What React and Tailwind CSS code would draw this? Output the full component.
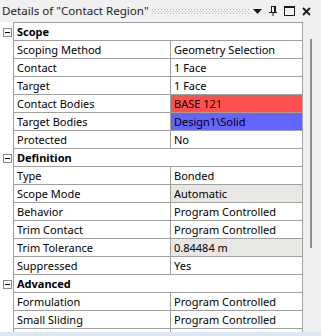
import React from "react";

const rows = [
  { section: "Scope" },
  { name: "Scoping Method", value: "Geometry Selection" },
  { name: "Contact", value: "1 Face" },
  { name: "Target", value: "1 Face" },
  { name: "Contact Bodies", value: "BASE 121", bg: "bg-[#ff5050]" },
  { name: "Target Bodies", value: "Design1\\Solid", bg: "bg-[#6464ff]" },
  { name: "Protected", value: "No" },
  { section: "Definition" },
  { name: "Type", value: "Bonded" },
  { name: "Scope Mode", value: "Automatic", bg: "bg-[#e8e7e3]" },
  { name: "Behavior", value: "Program Controlled" },
  { name: "Trim Contact", value: "Program Controlled" },
  { name: "Trim Tolerance", value: "0.84484 m", bg: "bg-[#e8e7e3]" },
  { name: "Suppressed", value: "Yes" },
  { section: "Advanced" },
  { name: "Formulation", value: "Program Controlled" },
  { name: "Small Sliding", value: "Program Controlled" },
];

function MinusBox() {
  return (
    <svg width="9" height="9" viewBox="0 0 9 9" className="block">
      <rect x="0.5" y="0.5" width="8" height="8" fill="white" stroke="#8a8a8a" />
      <rect x="2" y="4" width="5" height="1" fill="#000" />
    </svg>
  );
}

function Row({ r }) {
  if (r.section) {
    return (
      <div className="flex h-[18px]">
        <div className="w-[13px] flex items-center pl-[3px]">
          <MinusBox />
        </div>
        <div className="flex-1 border-l border-b border-r border-[#a0a0a0] flex items-center pl-[3px] font-bold text-black">
          {r.section}
        </div>
      </div>
    );
  }
  return (
    <div className="flex h-[18px]">
      <div className="w-[13px]" />
      <div className="flex-1 flex border-l border-b border-r border-[#a0a0a0]">
        <div className="w-[157px] border-r border-[#a0a0a0] flex items-center pl-[3px] text-black whitespace-nowrap">
          {r.name}
        </div>
        <div className={"flex-1 flex items-center pl-[3px] text-black whitespace-nowrap " + (r.bg || "")}>
          {r.value}
        </div>
      </div>
    </div>
  );
}

export default function App() {
  return (
    <div
      className="w-[321px] h-[336px] bg-[#f0f0f0] flex flex-col overflow-hidden text-[11px] leading-none"
      style={{ fontFamily: '"Noto Sans", sans-serif' }}
    >
      <div className="h-[22px] flex items-center pl-[2px] pr-[10px] shrink-0">
        <span className="text-[#1e1e1e] whitespace-nowrap text-[11.6px]">Details of "Contact Region"</span>
        <svg className="ml-[3px] flex-1" height="5">
          <defs>
            <pattern id="dots" width="3" height="4" patternUnits="userSpaceOnUse">
              <rect x="0" y="0" width="1" height="1" fill="#b4b4b4" />
              <rect x="1.5" y="2" width="1" height="1" fill="#b4b4b4" />
            </pattern>
          </defs>
          <rect x="0" y="0" width="100%" height="5" fill="url(#dots)" />
        </svg>
        <div className="ml-[4px] flex items-center">
          <svg width="9" height="5" viewBox="0 0 9 5">
            <path d="M0 0 H9 L4.5 5 Z" fill="#1a1a1a" />
          </svg>
          <svg className="ml-[7px]" width="8" height="10" viewBox="0 0 8 10">
            <path d="M2 0.5 H6.5 V6" fill="none" stroke="#1a1a1a" />
            <path d="M2.5 0 V6" stroke="#1a1a1a" />
            <rect x="5" y="0" width="2" height="6" fill="#1a1a1a" />
            <rect x="0" y="6" width="8" height="1" fill="#1a1a1a" />
            <rect x="3.5" y="7" width="1" height="3" fill="#1a1a1a" />
          </svg>
          <svg className="ml-[7px]" width="11" height="10" viewBox="0 0 11 10">
            <rect x="0.5" y="1" width="10" height="8.5" fill="none" stroke="#1a1a1a" />
            <rect x="0" y="0" width="11" height="2" fill="#1a1a1a" />
          </svg>
          <svg className="ml-[7px]" width="9" height="9" viewBox="0 0 9 9">
            <path d="M1 1 L8 8 M8 1 L1 8" stroke="#1a1a1a" strokeWidth="1.8" />
          </svg>
        </div>
      </div>
      <div className="flex flex-1 min-h-0">
        <div className="w-[303px] bg-white flex flex-col">
          <div className="flex h-[1px]">
            <div className="w-[13px]" />
            <div className="flex-1 bg-[#a0a0a0]" />
          </div>
          {rows.map((r, i) => (
            <Row key={i} r={r} />
          ))}
          <div className="flex flex-1">
            <div className="w-[13px]" />
            <div className="flex-1 flex border-l border-r border-[#a0a0a0]">
              <div className="w-[157px] border-r border-[#a0a0a0]" />
            </div>
          </div>
        </div>
        <div className="flex-1 flex justify-center pt-[17px]">
          <div className="w-[2px] h-[209px] bg-[#8c8c8c] ml-[-2px]" />
        </div>
      </div>
      <div className="h-[4px] bg-[#dce7f3] shrink-0" />
    </div>
  );
}
